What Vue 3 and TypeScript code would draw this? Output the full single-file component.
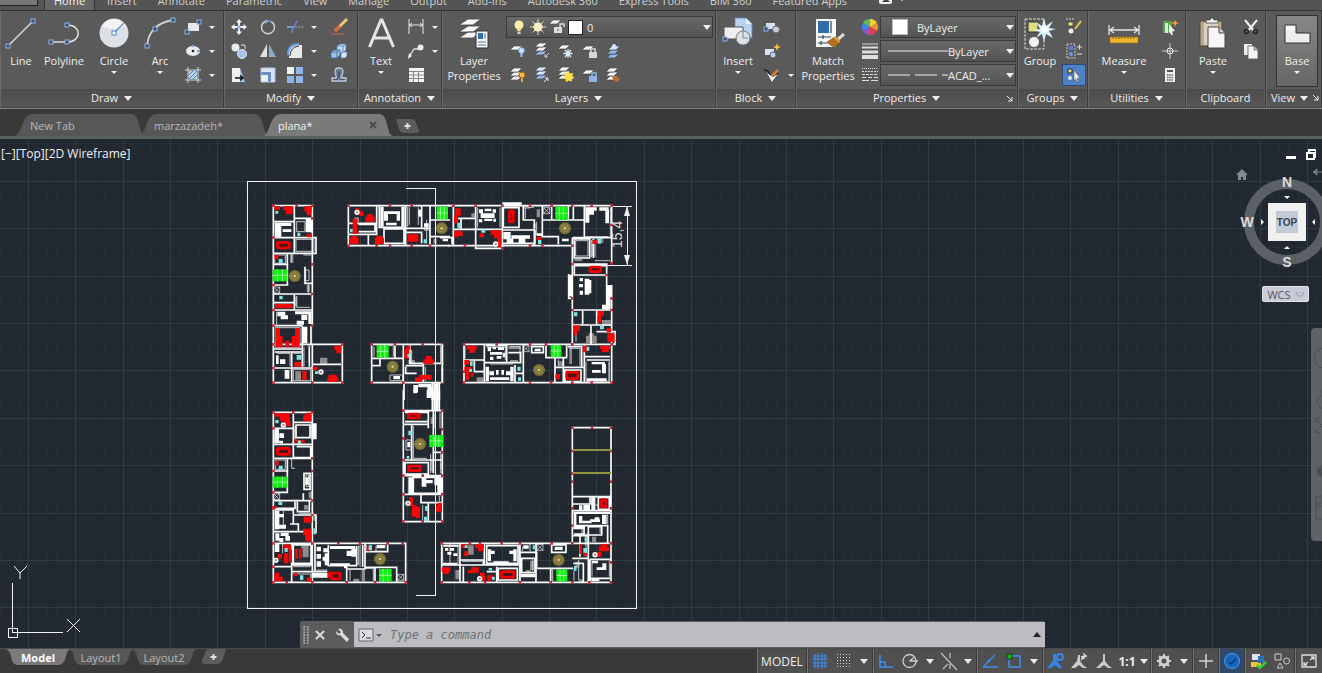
<script setup lang="ts">
import { computed, onMounted, onUnmounted, ref } from 'vue'

type Box = [number, number, number, number]
type Dot = [number, number]

interface Block {
  x: number
  y: number
  walls: string
  thin: string
  solid: Box[]
  red: Box[]
  tables: Box[]
  stairs: Box[]
  discs: Dot[]
  grey: Box[]
  cyan: Box[]
  posts: Dot[]
  lamps: Dot[]
  lifts: Dot[]
}

const boxes = (list: Box[]) => list.map(([x, y, w, h]) => `M${x} ${y}h${w}v${h}h${-w}z`).join('')

const menuTabs = ['Home', 'Insert', 'Annotate', 'Parametric', 'View', 'Manage', 'Output', 'Add-Ins', 'Autodesk 360', 'Express Tools', 'BIM 360', 'Featured Apps']
const fileTabs = ['New Tab', 'marzazadeh*', 'plana*']
const layoutTabs = ['Model', 'Layout1', 'Layout2']
const command = ref('')

const width = ref(window.innerWidth)
const height = ref(window.innerHeight)
const measure = () => {
  width.value = window.innerWidth
  height.value = window.innerHeight
}
onMounted(() => window.addEventListener('resize', measure))
onUnmounted(() => window.removeEventListener('resize', measure))

const step = 47.37
const gridPath = (major: boolean) => {
  const unit = major ? step : step / 5
  let d = ''
  for (let i = -6; i * unit + 28 < width.value; i++) {
    if (major || i % 5) d += `M${Math.round(28 + i * unit)} 0V${height.value}`
  }
  for (let i = -6; i * unit + 42 < height.value; i++) {
    if (major || i % 5) d += `M0 ${Math.round(42 + i * unit)}H${width.value}`
  }
  return d
}
const majorGrid = computed(() => gridPath(true))
const minorGrid = computed(() => gridPath(false))

const blocks: Block[] = [
  {
    x: 240, y: 31,
    walls: 'M100 107H217V467M100 107V638H307V523H100M217 523V638M163 107V250M100 155H163M163 145H217M100 203H228V250H100M142 250V345M100 283H145M100 345H145M100 372H217M100 398H163M163 375V420M100 420H217M100 467H187M187 467V590M100 537H187M104 546H187M155 546V638M100 594H217M217 583H303M213 467V523M208 530V590M195 290V340H215M325 107H630M325 227H630M325 107V227M410 107V160M418 107V172H497M497 107V227M325 160H410M356 163H405V185H356M410 160V193H325M385 193V227M432 177H492V220H432ZM545 107V175M497 175H570V227M570 107V227M500 187H545V220M570 150H630M570 200H630M395 523H607V638H395ZM465 523V565M395 565H490V638M490 523V565M510 523V583M510 580H607M550 583V638M497 587H550M420 565V587H395M497 590V610H530M492 638V690M577 638V690M598 638V690',
    thin: 'M107 160V200M170 155H195V185H170ZM168 208H222V244H168ZM104 255H136V280H104ZM155 250V278M190 255H214M197 300H207V332H197ZM205 340V370M170 378V412H210M110 425V465M106 473H180V533H106ZM192 530V590M202 528H212M110 550H150V588M160 550H182M160 598H212V632H160ZM503 112V170M508 112V165M535 112V165M560 150V220M440 527H460V560M450 615H488V632H450ZM515 540V580M602 527V578M556 590V634M402 530V560',
    solid: [[104, 158, 50, 10], [104, 165, 20, 36], [128, 178, 26, 8], [197, 145, 19, 42], [112, 425, 24, 14], [122, 436, 22, 12], [165, 424, 50, 9], [184, 434, 18, 16], [170, 452, 22, 12], [205, 430, 10, 32], [188, 470, 14, 50], [120, 568, 16, 14], [134, 600, 14, 26], [108, 556, 8, 26], [421, 110, 10, 60], [484, 110, 10, 60], [438, 158, 32, 8], [432, 124, 12, 28], [470, 124, 10, 28], [437, 124, 38, 8], [520, 645, 14, 22], [535, 642, 40, 10], [562, 652, 14, 22], [580, 640, 16, 50], [460, 618, 20, 10], [535, 120, 10, 20], [552, 160, 14, 10]],
    red: [[103, 108, 17, 12], [130, 108, 28, 13], [138, 120, 20, 12], [193, 108, 22, 16], [200, 122, 14, 14], [200, 192, 16, 10], [103, 255, 12, 12], [105, 402, 52, 13], [106, 474, 14, 58], [120, 498, 8, 34], [165, 474, 14, 58], [155, 498, 10, 34], [136, 512, 12, 20], [283, 527, 21, 14], [289, 540, 14, 10], [266, 614, 24, 10], [262, 622, 33, 14], [163, 576, 20, 14], [218, 590, 14, 10], [187, 602, 13, 28], [345, 115, 14, 10], [358, 124, 12, 14], [376, 140, 28, 15], [382, 132, 16, 10], [338, 146, 14, 46], [328, 203, 28, 19], [334, 198, 16, 8], [404, 203, 28, 19], [409, 198, 18, 8], [503, 193, 32, 22], [493, 536, 14, 30], [499, 527, 12, 12], [557, 558, 18, 12], [550, 568, 31, 14], [525, 622, 20, 14], [550, 615, 25, 14], [538, 614, 12, 14]],
    tables: [[108, 213, 44, 25]],
    stairs: [[98, 298, 44, 36], [590, 110, 34, 38], [410, 525, 36, 38]],
    discs: [[164, 318], [605, 175], [458, 590]],
    grey: [[166, 604, 17, 27], [240, 563, 22, 18], [150, 250, 10, 28], [200, 345, 10, 20], [343, 142, 14, 14], [536, 118, 9, 18], [552, 165, 14, 18], [505, 570, 20, 12], [580, 207, 10, 14], [164, 380, 8, 30]],
    cyan: [[106, 123, 9, 8], [172, 188, 9, 10], [116, 267, 12, 12], [170, 555, 14, 14], [225, 604, 9, 8], [330, 177, 8, 10], [551, 208, 10, 12], [118, 378, 10, 10], [502, 552, 8, 10]],
    posts: [[100, 107], [170, 107], [217, 107], [217, 145], [100, 203], [217, 283], [100, 345], [217, 372], [100, 420], [217, 467], [100, 467], [100, 523], [100, 594], [100, 638], [217, 638], [307, 523], [307, 638], [325, 107], [450, 107], [515, 107], [325, 227], [410, 227], [450, 227], [515, 227], [570, 227], [395, 523], [465, 523], [548, 523], [607, 523], [395, 638], [490, 638], [607, 638], [607, 580]],
    lamps: [[351, 127], [243, 606]],
    lifts: [[110, 360]],
  },
  {
    x: 440, y: 31,
    walls: 'M24 107H515M24 227H397M515 107V280M397 203V523M40 107V227M107 107V235H187V107M40 145H107M63 145V178M40 178H187M190 113H237V172H190ZM187 180H285V220H187ZM250 107V150H283V227M307 107V200H355V223M307 150H433M335 107V150M385 107V150M400 107V150M433 107V200M397 203H515M403 207H449V264H403ZM460 207V264M397 282H503M403 287H500V315H403ZM500 285V420M515 345V638M397 420H515M428 420V462M470 420V465M397 465H515M453 465V523M470 485H525V523H470M386 312V385H397M72 523H515M72 638H515M72 523V638M133 523V638M72 570H133M103 570V605H133M133 578H242V545M138 527H200V575M205 548H245M250 523V638M225 585V638M225 610H250M275 530H310V548H275ZM318 523V563H380V523M345 563V638M370 563V638M345 592H430M384 530H425V592M433 523V638M440 570H510M433 560H510M375 600H423V635H375ZM0 203H36V222M7 523V638',
    thin: 'M113 113V172M180 113V172M256 112V146M262 112H282M290 155V195M407 212H444V258H407ZM454 210V262M465 210V262M511 112V200M464 272H510M436 200H505M392 318V380M505 350V395M408 468V515M476 425V460M388 535H420V588M438 575V634H508V575M210 530H240V572M150 582H220M140 532H196V570M355 568V590M75 528V565M507 575V634',
    solid: [[187, 97, 58, 12], [436, 112, 12, 46], [436, 112, 34, 10], [478, 112, 28, 10], [496, 120, 11, 40], [448, 122, 14, 12], [117, 118, 12, 12], [134, 116, 20, 8], [158, 118, 10, 10], [122, 130, 42, 14], [117, 148, 10, 9], [133, 146, 24, 7], [160, 146, 8, 9], [190, 186, 22, 22], [214, 196, 56, 10], [200, 206, 20, 14], [236, 206, 20, 14], [384, 314, 12, 64], [501, 345, 12, 40], [486, 404, 26, 14], [498, 370, 14, 40], [419, 324, 10, 10], [417, 342, 12, 10], [419, 362, 10, 12], [434, 326, 14, 48], [448, 330, 6, 40], [137, 590, 10, 44], [211, 590, 10, 44], [148, 604, 14, 12], [168, 600, 8, 14], [184, 600, 8, 14], [198, 604, 14, 12], [150, 622, 58, 8], [143, 532, 10, 12], [158, 530, 10, 8], [174, 532, 18, 8], [150, 546, 36, 8], [150, 560, 10, 10], [170, 558, 14, 8], [188, 548, 8, 14], [455, 576, 40, 7], [486, 582, 12, 28], [456, 600, 26, 8], [440, 625, 60, 8], [284, 536, 18, 8], [366, 206, 20, 8], [8, 206, 16, 8], [290, 190, 16, 8]],
    red: [[46, 115, 16, 22], [42, 134, 12, 26], [42, 182, 14, 20], [56, 184, 12, 14], [152, 180, 32, 14], [162, 194, 20, 10], [172, 204, 12, 28], [118, 190, 14, 12], [474, 423, 18, 14], [472, 437, 12, 22], [400, 466, 20, 16], [400, 480, 12, 14], [500, 475, 14, 12], [502, 490, 22, 26], [428, 527, 12, 20], [480, 527, 30, 10], [486, 536, 20, 10], [458, 210, 14, 12], [80, 527, 30, 12], [88, 538, 16, 10], [73, 570, 14, 14], [73, 590, 20, 14], [76, 604, 12, 26], [92, 608, 8, 12], [346, 612, 14, 16], [290, 200, 14, 10]],
    tables: [[446, 287, 40, 22], [376, 603, 42, 27], [204, 118, 20, 42]],
    stairs: [[346, 110, 36, 40], [332, 525, 32, 36]],
    discs: [[375, 175], [297, 600]],
    grey: [[438, 497, 32, 22], [446, 490, 16, 10], [486, 450, 26, 18], [110, 622, 20, 14], [94, 130, 12, 12], [290, 118, 10, 24], [280, 160, 10, 14], [205, 528, 38, 10], [210, 570, 24, 10], [470, 205, 20, 14], [455, 222, 8, 36], [403, 266, 24, 8], [355, 574, 16, 14], [388, 532, 8, 50], [250, 108, 20, 8]],
    cyan: [[124, 178, 12, 10], [52, 158, 9, 16], [402, 427, 10, 12], [480, 468, 12, 10], [474, 205, 9, 16], [90, 574, 8, 14], [88, 596, 8, 10], [232, 590, 10, 12], [234, 622, 9, 10], [294, 210, 10, 12], [440, 530, 8, 12]],
    posts: [[40, 107], [107, 107], [187, 107], [270, 107], [335, 107], [397, 107], [455, 107], [515, 107], [515, 165], [75, 227], [187, 235], [270, 227], [307, 227], [397, 227], [397, 282], [515, 280], [500, 315], [397, 385], [515, 385], [397, 420], [397, 523], [515, 420], [515, 523], [72, 523], [170, 523], [270, 523], [318, 523], [72, 638], [270, 638], [333, 638], [397, 638], [455, 638], [515, 638], [72, 605]],
    lamps: [[167, 222]],
    lifts: [[320, 122], [258, 536]],
  },
  {
    x: 240, y: 251,
    walls: 'M100 67H217V460M100 67V577H497V460H100M160 67V205M160 97H217M100 115H160M168 105H210V143H168ZM100 163H217M170 170H212V203H160M100 205H217M142 205V243M100 243H145M142 243V307H100M100 332H217M100 355H165V335M104 360H160V402M100 425H160M150 402H175V425M160 375H228V430M160 425H217M172 335V365H208V332M155 460V577M217 460V577M160 465H213V520H160ZM155 525H217M155 545H217M100 530H155M217 545H262M312 532H320V577M225 462V545M265 465V527H350V468M368 465V530M320 537H375V462M375 485H443V460M375 532H470V577M405 535V577M192 250H210V298H192ZM217 332H190V310M490 0V395H607V62M490 62H607M495 67H565V95H495M490 103H565M515 105V210M490 210H607M495 218H565V252H495ZM490 257H607M520 262H600V310H520ZM490 313H607M543 313V338H607M565 340V395M580 62V250M580 187H607M565 67V115M577 0V62M598 0V62',
    thin: 'M106 120V158M106 210H136V238H106ZM155 207V235H165M198 255H206V290H198ZM176 370H222M108 365V420M130 362V415M128 462V490M160 530H212M160 552H212V575M230 540H262M355 468V525M380 465V480M378 535H400V572M330 540V572M408 468V484H438M498 150H513V180H498ZM585 68V115M600 68V115M572 192V250M602 192V250M548 345V390M520 108V205H560M598 318V335M360 465V530M217 470V525',
    solid: [[214, 100, 16, 48], [103, 115, 14, 44], [118, 130, 14, 14], [105, 152, 24, 8], [196, 262, 10, 22], [104, 362, 14, 56], [118, 372, 14, 10], [118, 404, 20, 12], [106, 430, 12, 22], [122, 428, 24, 10], [136, 438, 14, 14], [118, 444, 12, 12], [217, 549, 48, 14], [270, 468, 76, 9], [320, 482, 16, 16], [334, 476, 14, 24], [230, 470, 13, 14], [230, 492, 13, 14], [230, 514, 13, 16], [250, 475, 14, 12], [254, 490, 10, 36], [248, 500, 8, 12], [104, 462, 14, 24], [505, 262, 14, 50], [545, 262, 14, 28], [556, 270, 22, 10], [583, 264, 24, 22], [592, 286, 14, 26], [580, 0, 16, 62], [410, 465, 26, 10], [270, 520, 60, 8], [502, 156, 8, 16], [520, 0, 12, 10], [560, 0, 14, 24]],
    red: [[103, 70, 44, 10], [120, 80, 30, 14], [132, 94, 20, 14], [190, 74, 24, 20], [196, 68, 18, 10], [163, 148, 10, 10], [180, 150, 14, 10], [105, 212, 11, 14], [192, 380, 24, 18], [190, 416, 25, 20], [196, 434, 19, 20], [132, 464, 22, 14], [146, 478, 10, 40], [132, 490, 12, 30], [112, 492, 14, 14], [166, 476, 8, 30], [177, 476, 8, 30], [103, 548, 15, 26], [116, 560, 12, 14], [200, 563, 15, 12], [163, 548, 10, 10], [262, 545, 10, 18], [507, 322, 12, 26], [516, 346, 14, 34], [528, 350, 12, 34], [588, 345, 18, 20], [594, 338, 12, 10], [97, 348, 12, 8], [380, 470, 8, 14]],
    tables: [[108, 171, 44, 26], [270, 545, 34, 26], [502, 68, 40, 20], [503, 224, 42, 22]],
    stairs: [[98, 260, 44, 33], [417, 537, 38, 38], [568, 135, 42, 36]],
    discs: [[540, 162], [420, 507]],
    grey: [[188, 474, 18, 28], [184, 468, 22, 8], [192, 345, 12, 14], [160, 110, 7, 40], [172, 150, 14, 14], [340, 566, 18, 10], [365, 540, 10, 34], [572, 82, 10, 20], [600, 220, 9, 16], [570, 210, 10, 34], [206, 305, 10, 20], [220, 372, 8, 20]],
    cyan: [[106, 90, 10, 10], [174, 152, 9, 10], [116, 227, 12, 12], [115, 335, 12, 10], [220, 415, 8, 18], [134, 474, 9, 12], [180, 556, 10, 14], [386, 466, 10, 14], [505, 122, 12, 14], [555, 348, 9, 14], [552, 380, 10, 14], [500, 198, 8, 8]],
    posts: [[100, 67], [160, 67], [217, 67], [100, 115], [217, 205], [100, 243], [217, 243], [100, 307], [100, 355], [217, 332], [217, 375], [217, 460], [100, 460], [100, 530], [100, 577], [140, 577], [217, 577], [295, 460], [360, 460], [443, 460], [488, 460], [320, 577], [405, 577], [497, 577], [490, 62], [607, 62], [490, 145], [607, 118], [490, 210], [607, 187], [490, 257], [548, 257], [490, 313], [607, 313], [490, 395], [548, 395], [607, 395], [607, 257]],
    lamps: [[130, 105], [108, 511], [504, 340]],
    lifts: [[110, 320], [482, 562]],
  },
  {
    x: 430, y: 251,
    walls: 'M427 113H543V577H35V460H427V113M427 320H543M505 323H538V358H505ZM427 342H480V320M427 362H543M427 407H533V460M432 410H462V432H432M475 410H515V435H475ZM427 437H475V577M450 437V500M427 505H475M480 508H543M480 508V577M480 565H540M90 460V577M35 525H270M90 510H160V525M163 460V525M170 467H264V520H170ZM270 460V577M270 487H320V535M275 505H315V548H275ZM318 462V577M318 535H430M362 535V577M320 535H362V572M100 530V577M200 530V577M205 535H262V570H205ZM365 465H408V487H365ZM170 545H200M430 520H460V577M427 460H543',
    thin: 'M505 345H485V325M437 368V402M533 368V402M456 412V432M432 540V572M96 514H156M60 462V520M84 465V522M278 470V484M300 462V484M308 508V544M368 538V574M446 510V570M486 512V560M538 512V560M468 440V500M268 465V572M38 470V520',
    solid: [[430, 365, 110, 7], [431, 370, 8, 36], [447, 378, 10, 22], [457, 392, 28, 8], [480, 388, 30, 8], [494, 382, 14, 10], [516, 374, 14, 28], [447, 346, 10, 14], [460, 344, 20, 16], [484, 322, 12, 38], [40, 464, 46, 6], [45, 474, 10, 8], [60, 474, 12, 8], [70, 490, 12, 8], [52, 486, 12, 8], [38, 518, 44, 6], [173, 478, 10, 36], [182, 482, 12, 10], [250, 478, 10, 36], [238, 482, 12, 10], [190, 514, 46, 8], [517, 520, 12, 20], [486, 512, 18, 8], [500, 532, 28, 8], [484, 565, 24, 8], [374, 470, 24, 10], [272, 552, 44, 10], [280, 466, 16, 10], [430, 410, 34, 8]],
    red: [[35, 532, 26, 14], [42, 544, 14, 8], [94, 463, 16, 10], [135, 462, 27, 12], [144, 474, 17, 10], [103, 484, 12, 14], [124, 532, 22, 16], [114, 540, 12, 10], [150, 548, 14, 10], [156, 558, 10, 14], [172, 556, 18, 10], [172, 566, 10, 8], [448, 462, 8, 30], [460, 485, 10, 14], [506, 470, 32, 14], [512, 462, 20, 10], [502, 486, 12, 14]],
    tables: [[210, 541, 46, 25], [510, 325, 22, 30]],
    stairs: [[379, 538, 33, 37]],
    discs: [[386, 510]],
    grey: [[114, 466, 17, 28], [76, 540, 14, 28], [508, 412, 9, 18], [486, 440, 12, 16], [300, 512, 14, 28], [288, 540, 14, 10], [464, 430, 10, 34], [436, 515, 12, 18], [446, 568, 14, 8]],
    cyan: [[104, 466, 9, 8], [308, 466, 10, 12], [464, 444, 10, 10], [460, 474, 11, 14], [186, 560, 8, 10], [432, 528, 8, 14], [176, 534, 10, 7]],
    posts: [[427, 113], [486, 113], [543, 113], [427, 183], [543, 183], [427, 251], [427, 275], [543, 275], [427, 355], [543, 355], [427, 407], [35, 460], [120, 460], [150, 460], [215, 460], [270, 460], [365, 460], [427, 460], [543, 460], [35, 577], [118, 577], [165, 577], [270, 577], [362, 577], [427, 577], [478, 577], [543, 577], [543, 517]],
    lamps: [[149, 566], [495, 494]],
    lifts: [[330, 472]],
  },
]

const sq = (x: number, y: number) => `<rect x="${x - 2}" y="${y - 2}" width="4" height="4" fill="#3d4d66" stroke="#8ab4ee" stroke-width="1"/>`
const sheets = (x: number, y: number, n: number, c = '#f4f4f4') =>
  Array.from({ length: n }, (_, i) => n - 1 - i)
    .map((i) => `<path d="M${x + 4} ${y + i * 4}h8l-4 4h-8z" fill="${c}" stroke="#4a4a4a" stroke-width=".7"/>`)
    .join('')

const big: Record<string, string> = {
  line: `<path d="M3 29 28 4" stroke="#ddd" stroke-width="1.4"/>${sq(3, 29)}${sq(28, 4)}`,
  polyline: `<path d="M3 25H19C34 25 34 8 19 8" fill="none" stroke="#ddd" stroke-width="1.5"/>${sq(3, 25)}${sq(19, 25)}${sq(19, 8)}`,
  circle: `<circle cx="16" cy="16" r="14.5" fill="#dde1e5"/><path d="M4 9A14 14 0 0 1 28 9Q16 15 4 9" fill="#f2f3f4"/><path d="m16 16 10-10" stroke="#5b8fd0" stroke-width="1.2"/><rect x="14" y="14" width="4" height="4" fill="#fff" stroke="#4a86d0"/>`,
  arc: `<path d="M3 29Q5 7 29 3" fill="none" stroke="#d0d0d0" stroke-width="1.8"/>${sq(3, 29)}${sq(11, 12)}${sq(29, 3)}`,
  text: `<path d="M4.500 30 16 3h1L28.500 30M8.500 21H24.500" fill="none" stroke="#e6e6e6" stroke-width="3"/>`,
  layers: `<g stroke="#444" stroke-width=".8" fill="#f5f5f5"><path d="M10 15h13l-8 6H1zM10 9h13l-8 6H1zM10 2h13l-8 6H1z"/></g><path d="M18 14h12v17H18z" fill="#f6f6f6" stroke="#333"/><path d="M20 16h5v6h-5z" fill="#2f6aaa"/><path d="M27 16v6M20 25h8M20 28h8" stroke="#4a79ad"/>`,
  insert: `<path d="M13 1h11l6 6v14H13z" fill="#b9d2ee" stroke="#5d86b8" stroke-width=".8"/><path d="M24 1v6h6" fill="#e6f0fb"/><path d="M2 10h19v12H2z" fill="#eef0f2" stroke="#555"/><circle cx="21" cy="21" r="7" fill="#dfe3e6" stroke="#6e7780"/><path d="M21 21v-6M21 21h5" stroke="#72879c"/>${sq(3, 22)}`,
  match: `<path d="M4 2h20v28H4z" fill="#f7f7f7"/><path d="M6 4h11v12H6z" fill="#2e6da8"/><path d="M19 4v12M6 20h13M11 18v4M6 26h9M9 24v4" stroke="#2d435b" stroke-width="1.2"/><path d="m32 17-8 7" stroke="#d8d8d8" stroke-width="3"/><path d="m15 25 8-5 5 4q-2 5-6 6-3-1-7-5z" fill="#b67120" stroke="#5f3b12" stroke-width=".6"/><path d="m22 20 6 5" stroke="#e6a040" stroke-width="2"/>`,
  group: `<path d="M1 2h19v30H1z" fill="none" stroke="#d6d6d6" stroke-dasharray="3 1"/><path d="M4 5h10v10H4z" fill="#e0dd7a" stroke="#333"/><circle cx="10" cy="25" r="5.500" fill="#f1f1f1" stroke="#555"/><path d="m20 1 2 8 7-5-4 7 7 1-7 2 4 7-7-4-2 8-2-8-6 4 4-6-8-2 8-1-4-7 6 4z" fill="#d8efff"/><circle cx="21" cy="12" r="3.500" fill="#fff"/>`,
  measure: `<path d="M1 8v10M31 8v10M2 13h28M6 10l-4 3 4 3M26 10l4 3-4 3" fill="none" stroke="#e5e5e5" stroke-width="1.3"/><path d="M2 20h28v6H2z" fill="#f0b62e" stroke="#9a6c10" stroke-width=".6"/><path d="M5 20v2M8 20v2M11 20v2M14 20v2M17 20v2M20 20v2M23 20v2M26 20v2" stroke="#8d6410"/>`,
  paste: `<path d="M3 4h22v25H3z" fill="#b8a78f" stroke="#57493a"/><path d="M7 6h14v22H7z" fill="#d8d0c4"/><path d="M9 5V3h4l1-2h2l1 2h4v3H9z" fill="#f4f4f4" stroke="#444" stroke-width=".8"/><path d="M11 10h11l6 6v15H11z" fill="#f6f6f6" stroke="#444"/><path d="M22 10v6h6" fill="#cfcfcf" stroke="#444"/>`,
  base: `<path d="M4 8h11v8h14v10H4z" fill="#eceef0" stroke="#333"/><path d="M5 9h9v4H5z" fill="#fff"/>`,
}

const small: Record<string, string> = {
  rect: `<path d="M3 4h11v8H3z" fill="#e7e9ec"/>${sq(2, 13)}${sq(14, 3)}`,
  ellipse: `<ellipse cx="8" cy="8" rx="7" ry="5" fill="#e7e9ec"/><circle cx="8" cy="8" r="1.300" fill="#222"/><path d="M8 2v2M15 8h-3" stroke="#77aaf0" stroke-width="2"/>`,
  hatch: `<path d="M3 0v16M13 0v16M0 3h16M0 13h16" stroke="#cfd8e4"/><path d="M4 4h8v8H4z" fill="#bcd5f5"/><path d="m4 12 8-8M4 8l4-4M8 12l4-4" stroke="#4c7fc0"/>`,
  move: `<path d="M8 0 5 3.500h2V7H3.500V5L0 8l3.500 3V9H7v3.500H5L8 16l3-3.500H9V9h3.500v2L16 8l-3.500-3v2H9V3.500h2z" fill="#f0f0f0"/><circle cx="8" cy="8" r="1.800" fill="#7fb2f5"/>`,
  rotate: `<path d="M5 2.500A6.500 6.500 0 1 0 11 2.500" fill="none" stroke="#d5d5d5" stroke-width="1.500"/><path d="M5 0v5L9 2.500z" fill="#79a9e8"/><path d="M6 2a6 6 0 0 1 6 1" stroke="#79a9e8" fill="none"/>`,
  trim: `<path d="M0 8h7" stroke="#7fb0f0" stroke-width="1.500"/><path d="M8 8h8" stroke="#aaa" stroke-dasharray="2 1"/><path d="m4 14 6-12" stroke="#5f93d8" stroke-width="1.300"/>`,
  erase: `<path d="m16 0-8 8" stroke="#f0cc74" stroke-width="3"/><path d="m9 7-5 5" stroke="#d8703d" stroke-width="3.500"/><path d="M0 15h13" stroke="#d6604c" stroke-width="1"/>`,
  copy: `<circle cx="4.500" cy="4.500" r="4" fill="#ececec"/><circle cx="11" cy="11" r="4.500" fill="#a4c4ee" stroke="#dce8f8"/><path d="M10 2h4v4" fill="none" stroke="#ddd"/>`,
  mirror: `<path d="M7 1v13H0z" fill="#dfe2e5"/><path d="M9 1v13h7z" fill="#8fa9c7"/>`,
  fillet: `<path d="M2 15V9q0-7 7-7h6v13z" fill="#e8e8e8"/><path d="M1 12Q1 1 12 1" fill="none" stroke="#6b9fe0" stroke-width="2"/><path d="M3 13Q3 4 12 3" fill="none" stroke="#333"/>`,
  explode: `<path d="M6 3 9 1h6v6l-3 3H6z" fill="#c9dcf4" stroke="#4d78ac" stroke-width=".8"/><path d="M6 3h6v7M12 3l3-2" fill="none" stroke="#4d78ac" stroke-width=".8"/><path d="m0 9 3-2h6v5l-3 3H0z" fill="#9cc0ec" stroke="#3f6698" stroke-width=".8"/><path d="M0 9h6v6M6 9l3-2" fill="none" stroke="#3f6698" stroke-width=".8"/><path d="m10 10 2-1h4v4l-2 2h-4z" fill="#dbe7f6" stroke="#4d78ac" stroke-width=".8"/>`,
  stretch: `<path d="M1 1h8l5 14H1z" fill="#9dbfe9"/><path d="M1 1h8v14H1z" fill="#f2f2f2"/><path d="M4 11h7M9 8.500l3 2.500-3 2.500" stroke="#111" stroke-width="1.500" fill="none"/>`,
  scale: `<path d="M1 1h14v14H1z" fill="#d8e4f4"/><path d="M1 5h10v10H1z" fill="#6a8fc4"/><path d="M1 8h7v7H1z" fill="#f0f0f0"/><path d="M1 1h14v14H1z" fill="none" stroke="#aec6e6"/>`,
  array: `<path d="M0 0h7v7H0z" fill="#f0f0f0"/><path d="M9 0h7v7H9zM0 9h7v7H0zM9 9h7v7H9z" fill="#8fb4ea"/>`,
  offset: `<path d="M1 14v-3h4q1 0 0-2-3-8 3-8t3 8q-1 2 0 2h4v3z" fill="none" stroke="#b9cdea" stroke-width="1.300"/><path d="M6 8q-1-5 2-5t2 5-1 4H7" fill="none" stroke="#7fa6da"/>`,
  dim: `<path d="M1 0v15M15 0v15M1 6h14M4 4 1.500 6 4 8M12 4l2.500 2L12 8" fill="none" stroke="#e8e8e8"/>`,
  leader: `<path d="m1 14 5-8h5" fill="none" stroke="#e0e0e0" stroke-width="1.300"/><circle cx="12.500" cy="4.500" r="3" fill="#f0f0f0"/><path d="m0 16 1-6 3 3z" fill="#eee"/>`,
  table: `<path d="M1 1h15v14H1z" fill="#f3f3f3"/><path d="M1 4.500h15M1 8h15M1 11.500h15M5.500 4v11M10.500 4v11" stroke="#888"/>`,
  l1: `${sheets(0, 3, 1)}<circle cx="11.500" cy="7.500" r="3" fill="#cfe3fb" stroke="#5b90d4"/><path d="M11.500 10v4" stroke="#9dc1f2" stroke-width="2"/>`,
  l2: `${sheets(1, 8, 1, '#8fb6e8')}${sheets(1, 0, 2)}<path d="m15 10-4 4h3M11 14v-3" stroke="#ccc" fill="none"/>`,
  l3: `${sheets(0, 2, 1)}<path d="M10 6v9M5.500 10.500h9M7 7l6 7M13 7l-6 7" stroke="#d7ecff" stroke-width="1.300"/>`,
  l4: `${sheets(0, 3, 1)}<path d="M7 9h8v6H7z" fill="#d6d6d6"/><path d="M9 9V6h4v3" fill="none" stroke="#d6d6d6" stroke-width="1.500"/>`,
  l5: `${sheets(1, 7, 2, '#8fb6e8')}${sheets(2, 3, 1, '#d3e2f6')}<circle cx="8" cy="3" r="2" fill="#d3e6fb"/>`,
  l6: `${sheets(0, 1, 3)}<circle cx="12" cy="8" r="3" fill="#f4b84a" stroke="#a8660f"/><path d="M12 11v4" stroke="#dfa650" stroke-width="2"/>`,
  l7: `${sheets(1, 8, 1, '#8fb6e8')}${sheets(1, 0, 2, '#d3e2f6')}<path d="m10 15 4-4h-3M14 11v3" stroke="#eee" fill="none"/>`,
  l8: `${sheets(0, 0, 3)}<path d="m10.500 4 1.500 2.500 3-.5-.5 3 2 2-2.500 1-.5 3-2.500-1.500L8 15l-.5-3L5 11l2-2-.5-3 2.500.5z" fill="#ffe14a"/>`,
  l9: `${sheets(0, 3, 1)}<path d="M7 9h8v6H7z" fill="#8fb3e6"/><path d="M10 9V6h4v3" fill="none" stroke="#8fb3e6" stroke-width="1.500"/>`,
  l10: `${sheets(0, 1, 3)}<path d="m6 10 4-1 4 3-2 3-4-1z" fill="#c0692a"/>`,
  blk1: `<path d="M2 4h9v6H2z" fill="#d5e2f3"/><circle cx="12" cy="10.500" r="3.500" fill="#c8ccd2" stroke="#666"/>${sq(2, 10)}`,
  blk2: `<path d="M1 6h9v6H1z" fill="#d5e2f3"/><circle cx="9" cy="12" r="3" fill="#b7cdea" stroke="#567"/><path d="m13 0 1 3 3 1-3 1-1 3-1-3-3-1 3-1z" fill="#ffc93f"/>`,
  blk3: `<path d="m0 3 4 1 5 9 5-7" fill="none" stroke="#222" stroke-width="1.500"/><path d="m3 6 5 9 6-8-5 3z" fill="#f3f3f3"/><path d="m14 3-6 6" stroke="#d77e3d" stroke-width="2.500"/>`,
  wheel: `<path d="M8 8V0a8 8 0 0 1 7 4z" fill="#f3d13a"/><path d="m8 8 7-4a8 8 0 0 1 0 8z" fill="#ef8f36"/><path d="m8 8 7 4a8 8 0 0 1-7 4z" fill="#d94444"/><path d="M8 8v8a8 8 0 0 1-7-4z" fill="#9b50c8"/><path d="m8 8-7 4a8 8 0 0 1 0-8z" fill="#3f84e0"/><path d="M8 8 1 4a8 8 0 0 1 7-4z" fill="#58bd55"/>`,
  weight: `<path d="M0 1h16" stroke="#ddd"/><path d="M0 4.500h16" stroke="#ddd" stroke-width="2"/><path d="M0 9h16" stroke="#ddd" stroke-width="3"/><path d="M0 14h16" stroke="#ddd" stroke-width="4"/>`,
  ltype: `<g stroke="#ddd"><path d="M0 1.500h16" stroke-dasharray="1 1"/><path d="M0 4.500h16" stroke-dasharray="2 1"/><path d="M0 7.500h16" stroke-dasharray="3 1"/><path d="M0 10.500h16" stroke-dasharray="4 2"/><path d="M0 13.500h16" stroke-dasharray="7 2"/></g>`,
  ungroup: `<path d="M2 3h5v4H2z" fill="#e8e47c" stroke="#333" stroke-width=".7"/><circle cx="5" cy="12" r="2.500" fill="#f0f0f0"/><path d="m15 2-6 8" stroke="#e4c65a" stroke-width="2"/><path d="M0 0h9" stroke="#ccc" stroke-dasharray="2 1"/>`,
  gedit: `<path d="M1 1h8v14H1z" fill="none" stroke="#ccc" stroke-dasharray="2 1"/><path d="M3 3h4v4H3z" fill="#5480d8"/><circle cx="5" cy="11" r="2" fill="#6f97e4"/><path d="M11 4h5M13.500 1.500v5M11 11h5" stroke="#ddd"/>`,
  gselect: `<path d="M2 2h4v4H2z" fill="#e8e47c" stroke="#233"/><circle cx="4" cy="11" r="2" fill="#e8e8e8"/><path d="m8 3 6 8-3 .5 1.500 3-1.500.5-1.500-3L8 14z" fill="#e9f0dc" stroke="#445" stroke-width=".5"/>`,
  quick: `<path d="M1 2h9v12H1z" fill="#4fa64b"/><path d="M3 4h3v10H3z" fill="#d7ead6"/><path d="m7 5 6 7-3 .5 1 3-2 .5-1-3-1 1z" fill="#f4f4f4"/><path d="m13 1 1 2 3 1-3 1-1 3-1-3-3-1 3-1z" fill="#f29a35"/>`,
  point: `<path d="M8 0v16M0 8h16" stroke="#ccc"/><circle cx="8" cy="8" r="3" fill="none" stroke="#eee"/>`,
  calc: `<path d="M3 1h10v14H3z" fill="#eee"/><path d="M5 3h6v2H5z" fill="#555"/><path d="M5 8h6M5 10.500h6M5 13h6" stroke="#666" stroke-width="1.500" stroke-dasharray="1.500 .7"/>`,
  cut: `<path d="m2 1 9 11M14 1 5 12" stroke="#f1f1f1" stroke-width="2"/><circle cx="3.500" cy="12.500" r="2" fill="none" stroke="#222" stroke-width="1.500"/><circle cx="12.500" cy="12.500" r="2" fill="none" stroke="#222" stroke-width="1.500"/>`,
  clip: `<path d="M1 1h8v11H1z" fill="#ececec"/><path d="M5 3h6l4 4v9H5z" fill="#f8f8f8" stroke="#555" stroke-width=".8"/><path d="M11 3v4h4" fill="#ccc" stroke="#555" stroke-width=".7"/>`,
  bulb: `<circle cx="8" cy="6" r="4.500" fill="#fff0a6"/><path d="M5.500 9h5l-1 3h-3z" fill="#f3dc84"/><path d="M6.500 12.500h3v2.500h-3z" fill="#ccc"/>`,
  sun: `<path d="M8 0v16M0 8h16M2.500 2.500l11 11M13.500 2.500l-11 11" stroke="#e6ddaa"/><circle cx="8" cy="8" r="4.500" fill="#faf3c4"/>`,
  lock: `${sheets(0, 1, 1)}<path d="M5 8h8v6H5z" fill="#ddd"/><path d="M11 8V5h4v3" fill="none" stroke="#ddd" stroke-width="1.400"/><path d="M9 10v2" stroke="#555"/>`,
}

const status: Record<string, string> = {
  grid: `<path d="M3 1v14M6 0v16M10 0v16M13 1v14M1 3h14M0 6h16M0 10h16M1 13h14" stroke="#3f8df0"/>`,
  snap: `<path d="M1 1.500h15M1 4.500h15M1 7.500h15M1 10.500h15M1 13.500h15" stroke="#d4d4d4" stroke-dasharray="1 2"/>`,
  ortho: `<path d="M2 2v12h13M2 9h5v5" fill="none" stroke="#3f8df0" stroke-width="1.500"/>`,
  polar: `<circle cx="7.500" cy="8" r="6.500" fill="none" stroke="#ccc" stroke-width="1.300"/><path d="M7.500 8H16M7.500 8l5-4" stroke="#ccc" stroke-width="1.300"/>`,
  iso: `<path d="m0 0 16 17M9 0v5M7 11l-5 5M9 11v5" stroke="#bbb" stroke-width="1.300"/>`,
  track: `<path d="M1 14h15M2 13 13 2" stroke="#3f8df0" stroke-width="1.400"/><circle cx="7" cy="8" r="1.500" fill="#3f8df0"/>`,
  osnap: `<path d="M3 3h11v11H3z" fill="none" stroke="#3f8df0" stroke-width="1.500"/><path d="M1 1h5v5H1z" fill="#19b219" stroke="#0b470b"/>`,
  annoBlue: `<path d="M5 1h3v6l4 5 3 3h-4l-4-3-4 3H-1l6-7z" fill="#3584ea"/><circle cx="12" cy="4" r="3" fill="none" stroke="#3584ea" stroke-width="2"/><path d="m8 8 3-2" stroke="#3584ea" stroke-width="2"/>`,
  annoStar: `<path d="M6 2h2v6l3 4 4 3h-4l-4-3-4 3H-1l6-7z" fill="#ccc"/><path d="m9 4 6-1M12 0v6M9 7l5-5" stroke="#ddd" stroke-width="1.300"/>`,
  anno: `<path d="M7 1h2v7l3 4 4 3h-4l-4-3-4 3H0l7-7z" fill="#ccc"/>`,
  gear: `<circle cx="8" cy="8" r="4" fill="none" stroke="#d0d0d0" stroke-width="3"/><path d="M8 1v3M8 12v3M1 8h3M12 8h3M3 3l2 2M11 11l2 2M13 3l-2 2M5 11l-2 2" stroke="#d0d0d0" stroke-width="2"/>`,
  plus: `<path d="M8 1v14M1 8h14" stroke="#d4d4d4" stroke-width="1.500"/>`,
  perf: `<circle cx="8" cy="8" r="7.500" fill="#1767bd" stroke="#4a9cf0"/><path d="m5 9 2 2 5-5" fill="none" stroke="#0b3a70" stroke-width="1.500"/>`,
  notify: `<path d="M2 1h8v6H2z" fill="#dbe7f4"/><path d="M1 9h10v5H1z" fill="#ecc53d"/><path d="M8 3h6v7H8z" fill="#2c70b7"/><path d="m7 12 3 3 6-6" fill="none" stroke="#35cc35" stroke-width="2.500"/>`,
  objects: `<path d="M1 1h6v6H1z" fill="none" stroke="#ccc"/><circle cx="12.500" cy="8" r="3" fill="none" stroke="#ccc"/><path d="m6 10 3 5H3z" fill="none" stroke="#ccc"/>`,
  full: `<path d="M1 2h14v12H1z" fill="none" stroke="#ddd" stroke-width="1.300"/><path d="m9 7 4-3M10 4h3v3M7 9l-4 3M3 9v3h3" fill="none" stroke="#ddd" stroke-width="1.300"/>`,
}

const modifyTools = ['move', 'rotate', 'trim', 'erase', 'copy', 'mirror', 'fillet', 'explode', 'stretch', 'scale', 'array', 'offset']
const layerTools = ['l1', 'l2', 'l3', 'l4', 'l5', 'l6', 'l7', 'l8', 'l9', 'l10']

interface StatusItem { icon?: string; drop?: boolean; w: string; text?: string; label: string }
const statusGroups: StatusItem[][] = [
  [{ text: 'MODEL', w: 'w48', label: 'Model space' }],
  [{ icon: 'grid', w: 'w24', label: 'Grid' }, { icon: 'snap', w: 'w24', label: 'Snap' }, { drop: true, w: 'w16', label: 'Snap options' }],
  [{ icon: 'ortho', w: 'w24', label: 'Ortho' }, { icon: 'polar', w: 'w24', label: 'Polar tracking' }, { drop: true, w: 'w16', label: 'Polar options' }, { icon: 'iso', w: 'w22', label: 'Isometric drafting' }, { drop: true, w: 'w16', label: 'Isometric options' }],
  [{ icon: 'track', w: 'w24', label: 'Object snap tracking' }, { icon: 'osnap', w: 'w24', label: 'Object snap' }, { drop: true, w: 'w16', label: 'Object snap options' }],
  [{ icon: 'annoBlue', w: 'w24', label: 'Annotation visibility' }, { icon: 'annoStar', w: 'w24', label: 'Auto scale' }, { icon: 'anno', w: 'w24', label: 'Annotation scale' }, { text: '1:1', drop: true, w: 'w34', label: 'Scale' }],
  [{ icon: 'gear', w: 'w24', label: 'Workspace' }, { drop: true, w: 'w16', label: 'Workspace options' }],
  [{ icon: 'plus', w: 'w24', label: 'Annotation monitor' }],
  [{ icon: 'perf', w: 'w24', label: 'Hardware acceleration' }],
  [{ icon: 'notify', w: 'w24', label: 'Notifications' }, { icon: 'objects', w: 'w24', label: 'Isolate objects' }],
  [{ icon: 'full', w: 'w26', label: 'Clean screen' }],
]
</script>

<template>
  <div class="app">
    <nav class="menu">
      <button class="app-menu" aria-label="Application menu"></button>
      <button v-for="(t, i) in menuTabs" :key="t" class="menu-tab" :class="{ active: i === 0 }">{{ t }}</button>
      <button class="menu-extra" aria-label="Ribbon display">
        <svg width="14" height="12" viewBox="0 0 14 12"><path d="M0 0h13v9q0 2-2 2H2q-2 0-2-2z" fill="#eee" /><path d="m3 9 4-4 4 4z" fill="#444" /></svg>
        <i class="tri sm"></i>
      </button>
    </nav>

    <header class="ribbon">
      <section class="panel">
        <div class="body draw">
          <button class="big"><svg viewBox="0 0 32 36" v-html="big.line" /><span>Line</span></button>
          <button class="big"><svg viewBox="0 0 32 36" v-html="big.polyline" /><span>Polyline</span></button>
          <button class="big"><svg viewBox="0 0 32 36" v-html="big.circle" /><span>Circle</span><i class="tri sm" /></button>
          <button class="big"><svg viewBox="0 0 32 36" v-html="big.arc" /><span>Arc</span><i class="tri sm" /></button>
          <div class="stack left">
            <button v-for="n in ['rect', 'ellipse', 'hatch']" :key="n" class="tool" :aria-label="n"><svg viewBox="0 0 16 16" v-html="small[n]" /><i class="tri sm" /></button>
          </div>
        </div>
        <button class="title">Draw <i class="tri" /></button>
      </section>

      <section class="panel">
        <div class="body modify">
          <button v-for="(n, i) in modifyTools" :key="n" class="tool" :aria-label="n"><svg viewBox="0 0 16 16" v-html="small[n]" /><i v-if="i % 4 === 2" class="tri sm" /></button>
        </div>
        <button class="title">Modify <i class="tri" /></button>
      </section>

      <section class="panel">
        <div class="body annotation">
          <button class="big"><svg viewBox="0 0 32 36" v-html="big.text" /><span>Text</span><i class="tri sm" /></button>
          <div class="stack left">
            <button v-for="(n, i) in ['dim', 'leader', 'table']" :key="n" class="tool" :aria-label="n"><svg viewBox="0 0 16 16" v-html="small[n]" /><i v-if="i < 2" class="tri sm" /></button>
          </div>
        </div>
        <button class="title">Annotation <i class="tri" /></button>
      </section>

      <section class="panel">
        <div class="body layers">
          <button class="big"><svg viewBox="0 0 32 36" v-html="big.layers" /><span>Layer<br />Properties</span></button>
          <div class="layer-side">
            <div class="combo layer-combo">
              <svg v-for="n in ['bulb', 'sun', 'lock']" :key="n" viewBox="0 0 16 16" v-html="small[n]" />
              <b class="swatch" />
              <select aria-label="Layer"><option>0</option></select>
              <i class="tri" />
            </div>
            <div class="layer-tools">
              <button v-for="n in layerTools" :key="n" class="tool" :aria-label="n"><svg viewBox="0 0 16 16" v-html="small[n]" /></button>
            </div>
          </div>
        </div>
        <button class="title">Layers <i class="tri" /></button>
      </section>

      <section class="panel">
        <div class="body block">
          <button class="big"><svg viewBox="0 0 32 36" v-html="big.insert" /><span>Insert</span><i class="tri sm" /></button>
          <div class="stack left">
            <button v-for="(n, i) in ['blk1', 'blk2', 'blk3']" :key="n" class="tool" :aria-label="n"><svg viewBox="0 0 16 16" v-html="small[n]" /><i v-if="i === 2" class="tri sm" /></button>
          </div>
        </div>
        <button class="title">Block <i class="tri" /></button>
      </section>

      <section class="panel">
        <div class="body props">
          <button class="big"><svg viewBox="0 0 32 36" v-html="big.match" /><span>Match<br />Properties</span></button>
          <div class="stack">
            <button v-for="n in ['wheel', 'weight', 'ltype']" :key="n" class="tool" :aria-label="n"><svg viewBox="0 0 16 16" v-html="small[n]" /></button>
          </div>
          <div class="combos">
            <div class="combo"><b class="swatch wide" /><select aria-label="Colour"><option>ByLayer</option></select><i class="tri" /></div>
            <div class="combo"><svg class="sample" viewBox="0 0 60 4"><path d="M0 2h60" stroke="#eee" /></svg><select aria-label="Lineweight"><option>ByLayer</option></select><i class="tri" /></div>
            <div class="combo"><svg class="sample" viewBox="0 0 60 4"><path d="M0 2h22M27 2h22M54 2h6" stroke="#eee" /></svg><select aria-label="Linetype"><option>ACAD_...</option></select><i class="tri" /></div>
          </div>
        </div>
        <button class="title">Properties <i class="tri" /></button>
        <svg class="launch" viewBox="0 0 6 6"><path d="m0 0 5 5M5 1v4H1" fill="none" stroke="#eee" /></svg>
      </section>

      <section class="panel">
        <div class="body groups">
          <button class="big"><svg viewBox="0 0 32 36" v-html="big.group" /><span>Group</span></button>
          <div class="stack">
            <button v-for="(n, i) in ['ungroup', 'gedit', 'gselect']" :key="n" class="tool" :class="{ on: i === 2 }" :aria-label="n"><svg viewBox="0 0 16 16" v-html="small[n]" /></button>
          </div>
        </div>
        <button class="title">Groups <i class="tri" /></button>
      </section>

      <section class="panel">
        <div class="body utils">
          <button class="big"><svg viewBox="0 0 32 36" v-html="big.measure" /><span>Measure</span><i class="tri sm" /></button>
          <div class="stack">
            <button v-for="n in ['quick', 'point', 'calc']" :key="n" class="tool" :aria-label="n"><svg viewBox="0 0 16 16" v-html="small[n]" /></button>
          </div>
        </div>
        <button class="title">Utilities <i class="tri" /></button>
      </section>

      <section class="panel">
        <div class="body clipb">
          <button class="big"><svg viewBox="0 0 32 36" v-html="big.paste" /><span>Paste</span><i class="tri sm" /></button>
          <div class="stack">
            <button v-for="n in ['cut', 'clip']" :key="n" class="tool" :aria-label="n"><svg viewBox="0 0 16 16" v-html="small[n]" /></button>
          </div>
        </div>
        <button class="title">Clipboard</button>
      </section>

      <section class="panel">
        <div class="body view">
          <button class="big base"><svg viewBox="0 0 32 36" v-html="big.base" /><span>Base</span><i class="tri sm" /></button>
        </div>
        <button class="title view-title">View <i class="tri" /><svg class="mini" viewBox="0 0 6 6"><path d="m0 0 5 5M5 1v4H1" fill="none" stroke="#eee" /></svg></button>
      </section>
    </header>

    <nav class="files">
      <button v-for="(t, i) in fileTabs" :key="t" class="file" :class="{ active: i === 2 }">
        <svg class="shape" viewBox="0 0 130 23" preserveAspectRatio="none"><path d="M0 23C8 21 6 0 18 0H116C126 0 123 22 130 23Z" /></svg>
        <span>{{ t }}</span>
        <svg v-if="i === 2" class="close" viewBox="0 0 8 8"><path d="m1 1 6 6M7 1 1 7" stroke="#4b4b4b" stroke-width="2" /></svg>
      </button>
      <button class="add" aria-label="New drawing">
        <svg viewBox="0 0 24 16"><path d="M0 1h15q4 0 5 4l3 7q1 3-3 3H8q-4 0-5-4z" fill="#5c5c5c" /><path d="M11.500 5v6M8.500 8h6" stroke="#ddd" stroke-width="2" /></svg>
      </button>
    </nav>

    <main class="canvas">
      <svg class="drawing">
        <path :d="minorGrid" class="minor" />
        <path :d="majorGrid" class="major" />
        <g v-for="(b, i) in blocks" :key="i" :transform="`translate(${b.x} ${b.y}) scale(.33333)`">
          <path :d="boxes(b.grey)" fill="#8c8c8c" />
          <path :d="b.thin" class="thin" />
          <path :d="boxes(b.solid)" fill="#fff" />
          <path :d="b.walls" class="wall" />
          <path :d="boxes(b.red)" fill="#f40808" />
          <g v-for="([x, y, w, h], k) in b.tables" :key="'t' + k">
            <rect :x="x" :y="y" :width="w" :height="h" rx="7" fill="#f00000" />
            <rect :x="x + 8" :y="y + 8" :width="w - 16" :height="h - 16" rx="3" fill="#4c1218" />
          </g>
          <path :d="boxes(b.cyan)" fill="#7fe3e3" />
          <g v-for="([x, y, w, h], k) in b.stairs" :key="'s' + k">
            <rect :x="x" :y="y" :width="w" :height="h" fill="#12f012" />
            <path :d="`M${x + w / 3} ${y}v${h}M${x + (w * 2) / 3} ${y}v${h}M${x} ${y + h / 2}h${w}`" stroke="#d0ffd0" stroke-width="2" />
          </g>
          <g v-for="([x, y], k) in b.discs" :key="'d' + k">
            <circle :cx="x" :cy="y" r="18" fill="#7d7338" />
            <circle :cx="x" :cy="y" r="10" fill="none" stroke="#a39952" stroke-width="2" />
            <circle :cx="x" :cy="y" r="4" fill="#d4cc86" />
          </g>
          <circle v-for="([x, y], k) in b.lamps" :key="'l' + k" :cx="x" :cy="y" r="6" fill="#b99" stroke="#fff" stroke-width="4" />
          <path v-for="([x, y], k) in b.lifts" :key="'x' + k" :d="`M${x - 9} ${y - 9}h18v18h-18zl18 18m0 -18l-18 18`" class="lift" />
          <path :d="boxes(b.posts.map(([x, y]) => [x - 4, y - 4, 8, 8] as Box))" fill="#c8283a" />
        </g>
        <g transform="translate(0 -139)" class="frame">
          <path d="M247 181H636V608H247Z" />
          <path d="M406 188H435V595H416" />
          <path d="M573 450H611M573 473H611" class="olive" />
          <path d="M613 206H632M607 265H632M627 206V265" />
          <path d="m627 206-3 10h6zM627 265l-3-10h6z" class="arrow" />
          <text transform="translate(622 248) rotate(-90)">15,4</text>
          <path d="M12 583V632H63M8 628H17V637H8Z" />
          <path d="m14 566 6 7 7-7M20 573v6M67 619l13 13M80 619 67 632" class="axis" />
        </g>
      </svg>

      <div class="viewport-label">[&minus;][Top][2D Wireframe]</div>
      <svg class="win" viewBox="0 0 30 12"><path d="M0 7h10v3H0z" fill="#fff" /><path d="M21 4h7v6h-7zM23 3V1h7v7h-2" fill="none" stroke="#fff" stroke-width="2" /></svg>

      <svg class="cube" viewBox="0 0 90 110">
        <path d="m1 12 6-6 6 6H11v5H8v-3H6v3H3v-5z" fill="#858a90" />
        <path d="M78 9h9M78 9l4-3v6z" fill="#777c82" stroke="#777c82" />
        <circle cx="52" cy="59" r="38" fill="none" stroke="#5b6067" stroke-width="10" />
        <path d="M33 40h38v38H33z" fill="#f0f0ee" />
        <path d="M41 48h22v22H41z" fill="#c3cbd6" />
        <path d="M49 33h6l-3 3zM49 86h6l-3-3zM26 56v6l3-3zM80 56v6l-3-3z" fill="#f4f4f4" />
        <g class="compass"><text x="52" y="24">N</text><text x="12" y="64">W</text><text x="52" y="104">S</text><text class="top" x="52" y="63">TOP</text></g>
      </svg>
      <button class="wcs">WCS <svg viewBox="0 0 8 5"><path d="M0 0h8L6 4H2z" fill="none" stroke="#9a9cab" /></svg></button>

      <aside class="navbar">
        <svg viewBox="0 0 11 213"><g fill="none" stroke="#4a4f55"><path d="M13 20a10 10 0 0 0 0 20M11 62v6l-6 5 6 8M4 90l7 7M4 90v5M4 90h5M4 105l7-7M4 105v-5M4 105h5M11 138l-6 2M5 168v23h8M5 178h6M5 168h6v7H7" /><circle cx="10" cy="144" r="4" fill="#4a4f55" /></g></svg>
      </aside>

      <form class="command" @submit.prevent>
        <svg class="grip" viewBox="0 0 6 20"><path d="M1 0v20M5 0v20" stroke="#aaa" stroke-width="2" stroke-dasharray="2 1" /></svg>
        <button type="button" aria-label="Close"><svg viewBox="0 0 10 10"><path d="m1 1 8 8M9 1 1 9" stroke="#ddd" stroke-width="2" /></svg></button>
        <button type="button" aria-label="Customize"><svg viewBox="0 0 14 14"><path d="M1 3 4 6l2-2-3-3q5-1 5 4l6 6-2 3-7-7Q1 8 1 3z" fill="#ddd" /></svg></button>
        <label class="field">
          <svg class="prompt" viewBox="0 0 24 14"><path d="M1 1h14v12H1z" fill="#dcdde0" stroke="#666" /><path d="m4 4 3 3-3 3M8 10h5" fill="none" stroke="#333" /><path d="M18 6h6l-3 3z" fill="#555" /></svg>
          <input v-model="command" type="text" placeholder="Type a command" aria-label="Command" />
          <i class="tri up" />
        </label>
      </form>
    </main>

    <footer class="status">
      <div class="layouts">
        <button v-for="(t, i) in layoutTabs" :key="t" class="layout" :class="{ active: i === 0 }">
          <svg class="shape" viewBox="0 0 64 18" preserveAspectRatio="none"><path d="M0 0H64Q61 2 60 8Q58 17 52 17H12Q6 17 5 8Q4 2 0 0Z" /></svg>
          <span>{{ t }}</span>
        </button>
        <button class="add-layout" aria-label="New layout"><svg viewBox="0 0 26 16"><path d="M6 0h19l-3 10q-2 5-6 5H4q-4 0-3-4z" fill="#5c5c5c" /><path d="M12.500 5v6M9.500 8h6" stroke="#ddd" stroke-width="2" /></svg></button>
      </div>
      <div class="indicators">
        <div v-for="(g, i) in statusGroups" :key="i" class="group">
          <button v-for="s in g" :key="s.label" :class="[s.w, { perf: s.icon === 'perf' }]" :aria-label="s.label">
            <svg v-if="s.icon" viewBox="0 0 16 16" v-html="status[s.icon]" />
            <span v-if="s.text">{{ s.text }}</span>
            <i v-if="s.drop" class="tri" />
          </button>
        </div>
      </div>
    </footer>
  </div>
</template>

<style>
html, body { margin: 0; background: #393939; overflow: hidden; }
</style>

<style scoped>
.app { height: 100vh; display: flex; flex-direction: column; overflow: hidden; font: 11px/15px "Open Sans", "Noto Sans", sans-serif; color: #eee; }
button, select, input { font: inherit; color: inherit; background: none; border: 0; padding: 0; margin: 0; }
button { cursor: pointer; white-space: nowrap; }
svg { display: block; flex: none; }
.tri { flex: none; display: inline-block; width: 0; height: 0; border: 4px solid transparent; border-top: 5px solid #eee; border-bottom: 0; }
.tri.sm { border-width: 3px; border-bottom: 0; }
.tri.up { border-top: 0; border-bottom: 5px solid #222; }

.menu { height: 10px; flex: none; display: flex; align-items: flex-start; background: #545454; border-bottom: 1px solid #333; overflow: hidden; }
.app-menu { width: 38px; height: 6px; margin-right: 6px; background: #777; border: solid #222; border-width: 0 1px 1px 0; }
.menu-tab { height: 11px; padding: 0 10px 0 11px; line-height: 20px; color: #d0d0d0; display: flex; align-items: flex-end; }
.menu-tab.active { padding: 0 9px; margin-right: 1px; background: #666; color: #f2f2f2; border: solid #333; border-width: 0 1px; }
.menu-extra { display: flex; gap: 6px; margin-left: 22px; margin-top: -7px; align-items: center; }

.ribbon { flex: none; display: grid; grid-template-columns: 224fr 134fr 84fr 274fr 80fr 222fr 70fr 98fr 80fr 56fr; border-bottom: 1px solid #858585; background: #5a5a5a; }
.panel { position: relative; min-width: 0; display: flex; flex-direction: column; border-right: 1px solid #3c3c3c; box-shadow: inset 1px 0 #686868; }
.body { height: 74px; padding-top: 4px; display: grid; }
.title { height: 19px; display: flex; align-items: center; justify-content: center; gap: 6px; background: linear-gradient(#4c4c4c, #585858); margin: 0 1px; border-bottom: 1px solid #444; line-height: 18px; }
.big { display: flex; flex-direction: column; align-items: center; text-align: center; height: 72px; padding-top: 2px; }
.big svg { width: 32px; height: 36px; overflow: visible; }
.big .tri { margin-top: 3px; }
.stack { display: grid; grid-auto-rows: 24px; align-content: start; }
.tool { height: 24px; display: flex; align-items: center; justify-content: center; gap: 8px; }
.tool svg { width: 16px; height: 16px; overflow: visible; }
.left .tool { justify-content: flex-start; }
.draw { grid-template-columns: 42px 44px 56px 36px 46px; }
.draw .stack { padding-left: 7px; }
.modify { grid-template-columns: 30px 28px 40px 34px; grid-auto-rows: 24px; }
.annotation { grid-template-columns: 46px 38px; }
.annotation .stack, .block .stack { padding-left: 4px; }
.layers { grid-template-columns: 64px 1fr; }
.block { grid-template-columns: 44px 36px; }
.props { grid-template-columns: 64px 20px 1fr; }
.groups { grid-template-columns: 44px 24px; }
.utils { grid-template-columns: 72px 20px; }
.clipb { grid-template-columns: 54px 22px; }
.view { padding-left: 10px; grid-template-columns: 42px; }
.base { background: linear-gradient(#878787, #666); border: 1px solid #333; padding-top: 1px; }
.tool.on { background: #4f7fc4; border: 1px solid #2c4c7c; height: 22px; margin-top: 1px; }
.combo { box-sizing: border-box; height: 22px; display: flex; align-items: center; border: 1px solid #3a3a3a; background: linear-gradient(#696969, #545454); padding: 0 1px 0 4px; min-width: 0; }
.combo select { appearance: none; flex: 1; min-width: 0; height: 18px; outline: none; }
.swatch { width: 13px; height: 13px; flex: none; background: #fff; border: 1px solid #222; }
.swatch.wide { width: 14px; height: 14px; margin: 0 9px 0 7px; border-color: #bbb; }
.sample { width: 60px; height: 4px; margin-left: 3px; }
.layer-side { padding-right: 2px; }
.layer-combo { margin-top: 1px; margin-bottom: 1px; }
.layer-combo svg { width: 16px; height: 16px; margin-right: 3px; }
.layer-combo select { margin-left: 4px; }
.layer-tools { display: grid; grid-template-columns: repeat(5, 24px); }
.combos { display: grid; gap: 2px; align-content: start; padding: 1px 1px 0 0; min-width: 0; }
.launch { position: absolute; right: 4px; bottom: 6px; width: 6px; height: 6px; }
.mini { width: 6px; height: 6px; }
.view-title { gap: 5px; justify-content: flex-start; padding-left: 4px; }

.files { height: 27px; flex: none; display: flex; align-items: flex-end; padding-left: 15px; background: #393939; border-bottom: 3px solid #59605d; }
.file { position: relative; width: 130px; height: 22px; margin-right: -6px; padding-left: 15px; text-align: left; color: #b8b8b8; display: flex; align-items: center; font-size: 11px; }
.file .shape { position: absolute; inset: 0; width: 100%; height: 100%; fill: #575757; }
.file.active { color: #f0f0f0; }
.file.active .shape { fill: #7a7a7a; }
.file span { position: relative; flex: 1; }
.file .close { position: relative; width: 8px; height: 8px; margin-right: 16px; }
.add { width: 24px; height: 16px; margin: 0 0 2px 9px; }
.add svg { width: 24px; height: 16px; }

.canvas { position: relative; flex: 1; min-height: 0; overflow: hidden; background: #212830; }
.drawing { position: absolute; inset: 0; width: 100%; height: 100%; }
.minor { stroke: #252d36; shape-rendering: crispEdges; }
.major { stroke: #313b45; shape-rendering: crispEdges; }
.wall { fill: none; stroke: #fff; stroke-width: 5; }
.thin { fill: none; stroke: #c4c8cc; stroke-width: 3; }
.lift { fill: none; stroke: #eee; stroke-width: 2; }
.frame path { fill: none; stroke: #f2f2f2; shape-rendering: crispEdges; }
.frame path.olive { stroke: #8e9440; stroke-width: 2; }
.frame path.arrow { fill: #eee; stroke: none; shape-rendering: auto; }
.frame path.axis { shape-rendering: auto; }
.frame text { fill: #ddd; font: 14px "Liberation Sans", sans-serif; }
.viewport-label { position: absolute; left: 1px; top: 7px; font-size: 12px; }
.win { position: absolute; right: 6px; top: 10px; width: 30px; height: 12px; }
.cube { position: absolute; right: -3px; top: 24px; width: 90px; height: 110px; overflow: visible; }
.compass { font: bold 14px "Liberation Sans", sans-serif; fill: #dcdcdc; text-anchor: middle; }
.compass .top { font-size: 10px; fill: #394654; }
.wcs { position: absolute; right: 13px; top: 147px; width: 47px; height: 16px; border-radius: 3px; background: #c9cad8; color: #55565f; display: flex; align-items: center; justify-content: center; gap: 5px; box-shadow: inset 0 0 0 1px #e4e4ee; }
.wcs svg { width: 8px; height: 5px; }
.navbar { position: absolute; right: 0; top: 189px; width: 11px; height: 213px; background: #5e6266; border-radius: 4px 0 0 4px; overflow: hidden; }
.command { position: absolute; left: 300px; right: 277px; bottom: 0; height: 27px; display: flex; align-items: center; background: #5a5c5e; border-radius: 2px 2px 0 0; }
.grip { width: 6px; height: 18px; margin: 0 1px 0 3px; }
.command button { width: 20px; display: flex; justify-content: center; }
.command button svg { width: 10px; height: 10px; }
.command button + button { width: 24px; }
.command button + button svg { width: 14px; height: 14px; }
.field { flex: 1; height: 25px; display: flex; align-items: center; padding: 0 4px; background: #bcbdc1; }
.prompt { width: 24px; height: 14px; }
.field input { flex: 1; padding-left: 8px; outline: none; font: italic 12px "DejaVu Sans Mono", monospace; color: #333; }
.field input::placeholder { color: #707174; opacity: 1; }

.status { height: 24px; flex: none; display: flex; justify-content: space-between; background: #393939; border-top: 1px solid #4a4a4a; }
.layouts { display: flex; padding-left: 6px; }
.layout { position: relative; width: 64px; height: 17px; margin-right: -1px; color: #b8b8b8; }
.layout .shape { position: absolute; inset: 0; width: 100%; height: 100%; fill: #575757; }
.layout.active .shape { fill: #7a7a7a; }
.layout.active { color: #fff; font-weight: bold; }
.layout span { position: relative; }
.add-layout { margin-left: 6px; height: 16px; }
.add-layout svg { width: 26px; height: 16px; }
.indicators { display: flex; }
.group { display: flex; background: #505050; border-left: 1px solid #777; box-shadow: inset 1px 0 #444; margin-left: 1px; }
.group button { display: flex; align-items: center; justify-content: center; gap: 4px; height: 24px; font-size: 12px; }
.group svg { width: 16px; height: 16px; overflow: visible; }
.group .perf { background: #2d4a6b; }
.w16 { width: 16px; }
.w22 { width: 22px; }
.w24 { width: 24px; }
.w26 { width: 26px; }
.w34 { width: 34px; font-weight: bold; }
.w48 { width: 48px; }
</style>
